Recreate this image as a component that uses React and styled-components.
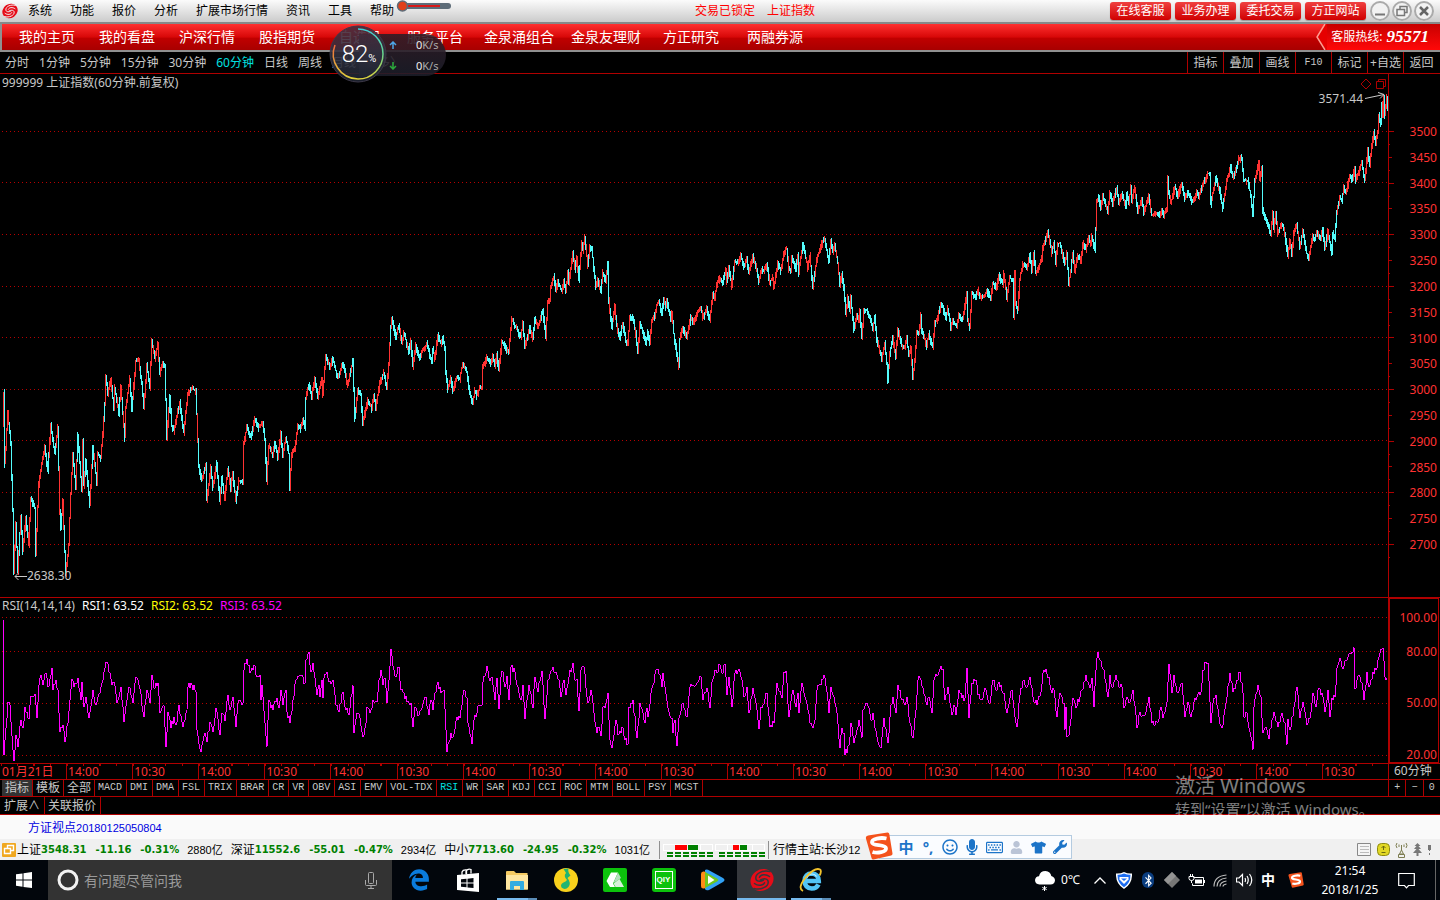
import styled, { createGlobalStyle, css } from "styled-components";
import {
  FaBluetoothB,
  FaEdgeLegacy,
  FaMicrophone,
  FaRegKeyboard,
  FaRegSmile,
  FaTshirt,
  FaUser,
  FaWrench,
} from "react-icons/fa";

const red = "#b00000";

const menuItems = ["系统", "功能", "报价", "分析", "扩展市场行情", "资讯", "工具", "帮助"];
const services = ["在线客服", "业务办理", "委托交易", "方正网站"];
const navItems = [
  ["我的主页", 80],
  ["我的看盘", 80],
  ["沪深行情", 80],
  ["股指期货", 80],
  ["自选股", 66],
  ["服务平台", 84],
  ["金泉涌组合", 84],
  ["金泉友理财", 90],
  ["方正研究", 80],
  ["两融券源", 88],
];
const periods = ["分时", "1分钟", "5分钟", "15分钟", "30分钟", "60分钟", "日线", "周线", "月线", "更多〉"];
const tools = ["指标", "叠加", "画线", "F10", "标记", "+自选", "返回"];
const indicators =
  "MACD DMI DMA FSL TRIX BRAR CR VR OBV ASI EMV VOL-TDX RSI WR SAR KDJ CCI ROC MTM BOLL PSY MCST".split(" ");
const priceLabels = Array.from({ length: 17 }, (_, i) => 3500 - i * 50);
const timeLabels = ["01月21日", ...Array.from({ length: 20 }, (_, i) => (i % 2 ? "10:30" : "14:00"))];
const quotes = [
  ["上证", "3548.31", "-11.16", "-0.31%", "2880亿"],
  ["深证", "11552.6", "-55.01", "-0.47%", "2934亿"],
  ["中小", "7713.60", "-24.95", "-0.32%", "1031亿"],
];

// turning points of the index, "x,y" in chart units
const pricePoints = `3,425 4,392 5,463 8,413 11,443 13,510 14,573 16,523 18,570 21,515 23,550 26,517 29,543 31,497 35,508
36,552 39,483 42,463 45,445 48,470 51,425 55,453 58,427 60,510 61,527 63,500 66,575 69,543 71,493 73,453 76,487 78,435
82,490 83,440 84,485 86,460 90,505 93,447 97,482 98,453 101,457 103,433 105,405 106,375 108,393 111,379 114,407 115,387
119,412 121,386 125,437 126,407 130,378 132,410 136,360 139,358 142,383 144,408 147,365 150,387 152,340 155,358 158,343
160,372 163,362 165,366 166,400 167,437 170,395 172,425 174,430 180,402 184,432 188,393 192,388 196,390 197,413 199,467
202,480 206,463 207,500 211,467 213,487 217,462 220,501 222,477 225,498 228,468 231,487 233,472 236,501 239,480 243,482
244,443 247,426 251,437 255,418 259,427 263,422 265,438 267,480 269,445 273,455 275,441 278,458 281,432 283,455 286,437
289,453 290,487 292,453 295,448 298,425 301,428 303,418 305,427 306,397 309,385 312,395 315,378 318,397 322,378 323,395
326,355 330,367 333,358 338,378 343,362 348,385 353,360 355,418 358,388 361,395 363,422 368,400 372,408 374,395 376,407
380,382 384,372 387,387 389,363 391,327 392,318 396,337 399,325 402,343 404,332 409,350 411,340 413,365 416,345 419,357
427,343 432,362 433,348 435,358 438,335 441,343 443,337 445,347 446,372 448,388 451,377 453,390 457,377 460,378 463,362
467,372 470,393 473,403 475,390 477,395 480,387 482,387 483,367 487,357 491,363 493,356 495,365 497,354 499,370 502,340
506,348 509,352 512,318 515,325 521,336 523,323 525,346 530,327 533,338 535,317 538,327 543,309 546,337 548,302 550,300
551,286 554,276 556,289 558,281 562,291 564,280 566,291 568,271 569,282 573,253 575,268 577,257 579,280 582,242 583,250
585,236 588,265 590,247 592,247 594,267 596,287 598,278 601,291 603,272 606,280 608,263 609,300 612,327 615,305 616,317
618,330 620,337 623,323 626,340 628,344 630,317 633,317 636,333 638,352 640,324 643,330 646,343 648,332 650,342 652,320
655,315 657,304 659,301 662,312 664,299 666,307 667,300 671,318 672,312 674,333 677,353 679,365 680,338 683,326 687,338
691,315 693,323 698,312 701,306 703,318 707,307 710,320 713,293 715,298 717,283 720,277 723,282 726,268 727,282 729,267
732,285 735,260 738,262 741,254 744,267 747,259 749,272 753,256 757,269 759,281 762,268 764,271 767,263 770,282 773,277
774,287 778,263 781,270 782,265 784,252 787,248 789,268 791,270 792,255 796,269 798,255 799,272 803,243 806,257 808,267
810,255 813,287 815,273 817,258 819,252 822,243 825,238 827,250 829,262 831,240 833,252 835,245 838,263 840,285 842,273
844,287 846,312 848,297 850,310 851,297 854,328 857,315 859,320 860,310 862,337 864,310 867,310 870,317 873,328 875,317
877,338 880,352 882,358 885,343 887,363 888,380 890,353 893,338 896,356 898,328 902,345 905,347 907,337 909,355 911,347
913,377 915,360 917,332 919,333 921,315 922,330 927,345 929,333 933,347 935,323 938,317 941,304 943,307 946,318 948,308
951,327 953,320 957,327 959,314 961,317 963,318 967,293 968,320 970,327 972,293 976,297 978,290 981,298 985,295 987,290
991,298 993,282 997,287 999,275 1003,283 1004,273 1007,297 1010,277 1013,280 1014,316 1015,272 1016,303 1018,310
1020,278 1023,263 1027,268 1030,255 1032,269 1034,253 1036,273 1042,258 1043,247 1048,232 1052,252 1054,242 1056,262
1058,243 1060,243 1062,250 1065,263 1067,253 1069,284 1071,270 1073,253 1075,270 1078,255 1081,260 1083,243 1086,248
1089,237 1091,243 1092,235 1095,250 1096,227 1097,200 1099,197 1101,207 1103,195 1108,212 1110,193 1113,202 1117,187
1119,202 1122,193 1126,205 1127,193 1129,201 1131,187 1132,200 1135,187 1138,210 1142,200 1144,212 1149,195 1152,215
1157,213 1159,216 1162,209 1164,214 1167,209 1168,177 1169,190 1171,203 1175,186 1178,195 1182,183 1185,198 1188,192
1193,202 1197,192 1199,195 1205,180 1208,173 1210,173 1211,203 1213,193 1216,178 1220,190 1223,208 1227,180 1231,166
1233,177 1237,167 1239,158 1242,157 1244,180 1248,180 1251,195 1253,214 1255,180 1259,162 1260,178 1262,168 1263,210
1266,218 1268,223 1271,233 1273,213 1274,229 1276,213 1278,232 1282,223 1285,233 1288,255 1290,240 1292,253 1294,233
1297,223 1300,247 1303,230 1307,253 1309,257 1313,235 1315,240 1317,232 1321,237 1323,228 1325,248 1328,231 1332,252
1333,232 1335,237 1337,213 1340,197 1342,200 1344,187 1346,193 1350,175 1352,180 1355,168 1356,180 1362,162 1365,180
1368,150 1370,165 1372,145 1374,132 1376,142 1378,132 1379,115 1381,123 1382,102 1383,117 1384,96 1385,115 1387,97`;

const rsiPoints = `3,617 4,755 8,702 10,705 13,750 14,761 16,735 18,747 21,720 23,728 25,707 29,719 31,696 35,694 37,718
39,685 41,675 43,685 46,673 48,687 52,668 53,690 56,680 58,690 60,732 63,725 65,742 68,723 70,700 72,679 74,687 78,678
81,700 82,682 84,707 86,697 89,718 93,690 96,705 100,693 104,672 107,662 110,673 112,685 114,682 117,703 121,687 124,722
129,687 133,703 136,677 139,685 144,717 147,690 150,703 152,675 154,688 158,683 160,713 164,705 166,747 168,712 171,728
174,717 176,725 179,705 183,727 187,710 188,687 192,685 196,692 197,730 201,752 205,733 207,742 210,722 213,732 216,708
220,735 222,713 225,721 228,695 230,710 233,697 236,727 238,703 243,703 244,670 247,659 250,673 254,665 257,677 260,675
261,700 262,685 265,723 267,747 269,700 273,710 277,698 279,708 281,690 283,705 286,690 287,712 290,723 293,700 296,680
300,675 305,683 306,660 309,652 311,672 313,663 317,695 319,685 320,697 322,680 323,698 324,678 327,672 329,682 333,680
336,705 339,712 343,692 346,710 349,715 353,685 354,733 357,713 360,718 363,737 366,723 367,707 370,713 373,700 377,702
379,680 381,670 383,685 385,678 387,703 389,680 391,649 394,670 396,677 399,667 401,690 404,693 407,702 411,703 413,727
415,707 419,715 426,697 429,715 431,700 433,710 435,693 438,682 441,693 444,690 446,730 447,752 451,733 453,737 457,717
460,718 462,705 464,690 467,698 468,723 472,744 474,720 477,713 479,705 482,706 483,682 487,666 489,678 492,677 495,700
497,678 499,709 501,677 503,672 505,687 507,676 509,700 511,667 515,672 519,693 521,700 523,685 525,719 529,685 533,708
535,677 538,692 542,671 545,719 548,680 553,667 556,672 559,680 561,697 564,680 566,695 569,677 573,663 575,680 577,679
579,711 581,670 584,667 587,697 588,703 591,690 594,713 597,733 599,727 601,736 603,707 605,708 608,693 610,740 612,748
616,720 618,735 623,728 625,740 628,744 629,707 633,700 637,738 640,703 645,723 647,708 648,717 652,688 657,669 660,675
662,687 663,673 665,687 669,712 672,718 673,733 675,720 677,746 679,718 683,703 687,717 690,687 693,685 696,685 701,677
703,700 707,688 710,708 712,682 715,670 717,673 719,664 722,673 725,664 727,695 729,677 732,707 735,673 740,672 743,687
744,697 747,687 749,713 753,688 756,703 759,729 761,707 763,705 767,693 770,727 774,723 777,683 782,698 784,672 786,671
789,717 793,690 796,707 798,693 799,713 802,683 806,700 810,723 813,728 815,720 817,690 822,679 824,675 827,692 829,713
831,687 834,697 837,713 840,748 842,728 844,733 845,755 849,745 851,723 854,743 859,720 862,738 863,710 867,703 872,720
873,713 877,737 881,748 884,718 888,743 891,705 893,697 896,713 898,685 902,700 905,705 907,697 909,717 913,738 916,710
918,680 920,678 923,688 927,705 929,697 932,713 934,680 941,666 943,669 945,700 948,687 952,715 954,705 956,715 959,690
962,698 965,698 967,668 969,718 972,683 976,680 978,695 983,698 985,688 990,703 993,680 997,690 999,682 1004,693
1007,713 1010,698 1012,690 1015,717 1017,727 1020,695 1024,680 1027,687 1030,677 1033,697 1037,705 1041,692 1043,673
1046,669 1049,677 1052,693 1054,690 1057,717 1060,693 1064,703 1065,730 1066,707 1067,737 1069,735 1073,698 1076,708
1082,690 1086,675 1090,688 1092,678 1094,707 1096,670 1098,652 1100,660 1104,670 1108,697 1110,675 1112,687 1116,675
1119,687 1122,687 1124,708 1127,697 1129,703 1133,690 1137,728 1140,712 1145,715 1149,697 1152,723 1158,722 1161,707
1163,718 1167,702 1169,664 1172,693 1174,675 1177,692 1182,683 1185,717 1188,702 1191,717 1195,698 1201,692 1203,670
1206,662 1208,663 1211,723 1213,703 1216,695 1219,717 1222,728 1227,697 1230,673 1233,692 1240,672 1243,693 1244,717
1247,713 1250,732 1253,750 1254,707 1258,685 1261,697 1263,733 1266,727 1269,739 1272,720 1274,712 1278,727 1282,713
1285,723 1287,745 1288,719 1290,730 1294,707 1297,687 1300,718 1303,702 1307,725 1310,718 1313,693 1316,707 1318,690
1322,693 1325,712 1328,690 1330,717 1332,698 1335,697 1337,668 1340,658 1342,667 1347,660 1350,653 1354,647 1355,688
1359,675 1362,683 1364,700 1367,672 1369,687 1373,672 1377,668 1379,657 1383,648 1385,677 1387,678`;

const parse = (text) => text.split(/\s+/).map((p) => p.split(",").map(Number));

// fixed pseudo random value for a column, 0..1
const noise = (n) => {
  const v = Math.sin(n * 127.1 + 11.7) * 43758.5453;
  return v - Math.floor(v);
};

const sample = (points) => {
  const out = [];
  for (let i = 0; i < points.length - 1; i++) {
    const [x0, y0] = points[i];
    const [x1, y1] = points[i + 1];
    for (let x = x0; x < x1; x++) {
      out.push({ x, y: y0 + ((y1 - y0) * (x - x0)) / (x1 - x0), fixed: x === x0 });
    }
  }
  const [x, y] = points[points.length - 1];
  out.push({ x, y, fixed: true });
  return out;
};

const buildBars = () => {
  const s = sample(parse(pricePoints));
  let up = "";
  let down = "";
  s.forEach((p, i) => {
    const next = s[i + 1] || { y: p.y + 10 };
    const top = Math.round(Math.min(p.y, next.y) - noise(p.x) * 3);
    const bottom = Math.round(Math.max(p.y, next.y) + 1 + noise(p.x + 3000) * 4);
    const rising = noise(p.x + 900) < 0.18 ? next.y >= p.y : next.y < p.y;
    const seg = `M${p.x} ${top}h1V${bottom}h-1z`;
    if (rising) up += seg;
    else down += seg;
  });
  return { up, down };
};

const buildRsi = () =>
  sample(parse(rsiPoints))
    .map((p) => `${p.x},${Math.round(p.fixed ? p.y : p.y + (noise(p.x) - 0.5) * 7)}`)
    .join(" ");

const bars = buildBars();
const rsiLine = buildRsi();
const priceGrid = [131, 182, 234, 286, 337, 389, 440, 492, 544];
const rsiGrid = [617, 651, 703, 755];

const Grid = ({ rows }) => (
  <g stroke='#b80000' strokeDasharray='1 3' shapeRendering='crispEdges'>
    {rows.map((y) => (
      <line key={y} x1='2' x2='1388' y1={y + 0.5} y2={y + 0.5} />
    ))}
  </g>
);

const Swirl = ({ size, gap }) => (
  <svg width={size} height={size} viewBox='0 0 24 24'>
    <ellipse cx='12' cy='12' rx='12' ry='10.5' fill='#e60c18' transform='rotate(-35 12 12)' />
    <g fill='none' stroke={gap} strokeWidth='1.500' strokeLinecap='round'>
      <path d='M20 3.500C13 1.500 5.500 5.500 5.800 10.200C6 13.800 10.500 13.800 13.500 12' />
      <path d='M4 20.500C11 22.500 18.500 18.500 18.200 13.800C18 10.200 13.500 10.200 10.500 12' />
      <path d='M19.500 8.500C16 5.800 10.500 6.500 9.500 9.300' />
      <path d='M4.500 15.500C8 18.200 13.500 17.500 14.500 14.700' />
    </g>
  </svg>
);

const SogouLogo = ({ size }) => (
  <svg width={size} height={size} viewBox='0 0 28 28'>
    <path d='M3 3.500L22.500.5Q24 .4 24.300 2L27.500 21.500Q27.700 23 26.200 23.500L8.500 27.500Q7 27.700 6.600 26.200L.8 6Q.5 4 3 3.500z' fill='#f4521c' />
    <path
      d='M21.500 6.500C16 5.300 6.500 6.500 7 10.500C7.500 14.300 20.500 12 21 16.300C21.400 20.300 12 21.500 7.500 20'
      fill='none'
      stroke='#fff'
      strokeWidth='3.800'
    />
  </svg>
);

const SpeedWidget = () => (
  <Speed>
    <SpeedPill>
      <SpeedRow>
        <svg width='8' height='8' viewBox='0 0 8 8' fill='none' stroke='#4da6e8' strokeWidth='1.500'>
          <path d='M4 8V1.500M1 4L4 1L7 4' />
        </svg>
        <b>0</b>K/s
      </SpeedRow>
      <SpeedRow>
        <svg width='8' height='8' viewBox='0 0 8 8' fill='none' stroke='#2bab3c' strokeWidth='1.500'>
          <path d='M4 0V6.500M1 4L4 7L7 4' />
        </svg>
        <b>0</b>K/s
      </SpeedRow>
    </SpeedPill>
    <SpeedDial>
      <svg width='58' height='58' viewBox='0 0 58 58'>
        <defs>
          <linearGradient id='ring' x1='0' y1='0' x2='0' y2='1'>
            <stop offset='0' stopColor='#3fd0d8' />
            <stop offset='.5' stopColor='#67d58c' />
            <stop offset='1' stopColor='#e0d23c' />
          </linearGradient>
          <linearGradient id='ringLeft' x1='0' y1='0' x2='0' y2='1'>
            <stop offset='0' stopColor='#f0683c' />
            <stop offset='1' stopColor='#e0d23c' />
          </linearGradient>
          <linearGradient id='dial' x1='0' y1='0' x2='0' y2='1'>
            <stop offset='0' stopColor='#4a2838' />
            <stop offset='.5' stopColor='#30303f' />
            <stop offset='1' stopColor='#1c2230' />
          </linearGradient>
        </defs>
        <circle cx='29' cy='29' r='28' fill='url(#dial)' fillOpacity='.9' stroke='#3c3848' />
        <path d='M29 4A25 25 0 0 1 29 54' fill='none' stroke='url(#ring)' strokeWidth='1.500' />
        <path d='M29 54A25 25 0 0 1 6 20' fill='none' stroke='url(#ringLeft)' strokeWidth='1.500' />
      </svg>
      <span>
        82<small>%</small>
      </span>
    </SpeedDial>
  </Speed>
);

const Meter = () => (
  <svg width='104' height='16' viewBox='0 0 104 16' shapeRendering='crispEdges'>
    {[0, 52].map((x) => (
      <g key={x} transform={`translate(${x} 0)`}>
        <path d='M.5 1.500h49v6h-49zM12.500 1v7M37.500 1v7' fill='none' stroke='#fff' />
        <rect x={x ? 18 : 12} y='2' width={x ? 6 : 12} height='5' fill='#f00' />
        <rect x='25' y='2' width={x ? 7 : 10} height='5' fill='#008000' />
        {[4, 12, 20, 28, 36, 44].map((dx) => (
          <path key={dx} d={`M${dx} 9h6v2h-6zM${dx} 12h6v2h-6z`} fill='#008000' />
        ))}
      </g>
    ))}
  </svg>
);

const App = () => {
  return (
    <>
      <GlobalStyle />
      <Screen>
        <MenuBar>
          <Swirl size={16} gap='#f4f4f4' />
          <Menu>
            {menuItems.map((m) => (
              <button key={m}>{m}</button>
            ))}
          </Menu>
          <LockState>
            <span>交易已锁定</span>
            <span>上证指数</span>
          </LockState>
          <Services>
            {services.map((s) => (
              <ServiceButton key={s}>{s}</ServiceButton>
            ))}
          </Services>
          <WindowButtons>
            <button aria-label='最小化'>
              <svg width='20' height='20' viewBox='0 0 20 20'>
                <path d='M5 13.500h10' stroke='#777' strokeWidth='2' />
              </svg>
            </button>
            <button aria-label='还原'>
              <svg width='20' height='20' viewBox='0 0 20 20' fill='none' stroke='#777' strokeWidth='1.500'>
                <path d='M8 8V5.500h7v6h-2.500M5 8.500h7.500v6H5z' />
              </svg>
            </button>
            <button aria-label='关闭'>
              <svg width='20' height='20' viewBox='0 0 20 20'>
                <path d='M6 6l8 8M14 6l-8 8' stroke='#666' strokeWidth='2.500' />
              </svg>
            </button>
          </WindowButtons>
        </MenuBar>

        <NavBar>
          {navItems.map(([name, width]) => (
            <NavButton key={name} $width={width}>
              {name}
            </NavButton>
          ))}
          <Hotline>
            <svg width='12' height='26' viewBox='0 0 12 26'>
              <path d='M10 0L2 13L11 26H12V0z' fill='#e60000' />
              <path d='M10 0L2 13L10 26' fill='none' stroke='#ff9c90' strokeWidth='1.500' />
            </svg>
            <p>
              客服热线:<strong>95571</strong>
            </p>
          </Hotline>
        </NavBar>

        <PeriodBar>
          <Periods>
            {periods.map((p) => (
              <PeriodButton key={p} $active={p === "60分钟"}>
                {p}
              </PeriodButton>
            ))}
          </Periods>
          {tools.map((t) => (
            <ToolButton key={t} $mono={t === "F10"}>
              {t}
            </ToolButton>
          ))}
        </PeriodBar>

        <PricePanel>
          <Plot>
            <svg viewBox='0 74 1388 523' preserveAspectRatio='none' role='img' aria-label='上证指数'>
              <Grid rows={priceGrid} />
              <g shapeRendering='crispEdges'>
                <path d={bars.up} fill='#ff3232' />
                <path d={bars.down} fill='#54fcfc' />
              </g>
            </svg>
            <PlotTitle>999999 上证指数(60分钟.前复权)</PlotTitle>
            <PlotTools>
              <svg width='28' height='12' viewBox='0 0 28 12' fill='none' stroke='#b00000'>
                <path d='M6 1L11 6L6 11L1 6z' />
                <path d='M16.500 3.500h7v7h-7zM18.500 3.500v-2h7v7h-2' />
              </svg>
            </PlotTools>
            <HighNote>
              3571.44
              <svg width='22' height='12' viewBox='0 0 22 12' fill='none' stroke='#c8c8c8'>
                <path d='M1 6.500L20 2.500M14 .5L20 2.500L16 6.500' />
              </svg>
            </HighNote>
            <LowNote>
              <svg width='13' height='9' viewBox='0 0 13 9' fill='none' stroke='#c8c8c8'>
                <path d='M1 4.500h12M4.500 1L1 4.500L4.500 8' />
              </svg>
              2638.30
            </LowNote>
          </Plot>
          <PriceAxis>
            <svg width='6' viewBox='0 74 6 523' preserveAspectRatio='none' stroke={red} shapeRendering='crispEdges'>
              {priceLabels.map((v, i) => {
                const y = Math.round(131 + i * 25.8) + 0.5;
                return <path key={v} d={`M0 ${y}h${i % 2 ? 3 : 5}M0 ${y + 13}h1`} />;
              })}
            </svg>
            <ol>
              {priceLabels.map((v) => (
                <li key={v}>{v}</li>
              ))}
            </ol>
          </PriceAxis>
        </PricePanel>

        <RsiPanel>
          <Plot>
            <svg viewBox='0 598 1388 165' preserveAspectRatio='none' role='img' aria-label='RSI'>
              <Grid rows={rsiGrid} />
              <polyline points={rsiLine} fill='none' stroke='#f0f' shapeRendering='crispEdges' />
            </svg>
            <PlotTitle $tight>
              RSI(14,14,14)
              <Value $color='#fff'>RSI1: 63.52</Value>
              <Value $color='#ff0'>RSI2: 63.52</Value>
              <Value $color='#f0f'>RSI3: 63.52</Value>
            </PlotTitle>
          </Plot>
          <RsiAxis>
            <li>100.00</li>
            <li>80.00</li>
            <li>50.00</li>
            <li>20.00</li>
          </RsiAxis>
        </RsiPanel>

        <TimeRow>
          <TimeAxis>
            {timeLabels.map((t, i) => (
              <li key={i}>{t}</li>
            ))}
          </TimeAxis>
          <SideCell>60分钟</SideCell>
        </TimeRow>

        <TabRow>
          <Tab $selected>指标</Tab>
          <Tab>模板</Tab>
          <Tab>全部</Tab>
          {indicators.map((t) => (
            <Tab key={t} $mono $active={t === "RSI"}>
              {t}
            </Tab>
          ))}
          <ZoomButtons>
            <button>+</button>
            <button>−</button>
            <button>0</button>
          </ZoomButtons>
        </TabRow>

        <ExtraRow>
          <ExtraTab>扩展∧</ExtraTab>
          <ExtraTab>关联报价</ExtraTab>
        </ExtraRow>

        <News>
          <a href='#news'>
            方证视点<span>20180125050804</span>
          </a>
        </News>

        <Ticker>
          <svg width='14' height='14' viewBox='0 0 14 14'>
            <rect width='14' height='14' rx='1' fill='#f0a820' />
            <path d='M5.500 5.500v-3h6v5h-3M2.500 5.500h6v5h-6z' fill='none' stroke='#fff' strokeWidth='1.400' />
          </svg>
          {quotes.map(([name, price, change, percent, amount]) => (
            <Quote key={name}>
              {name}
              <b>{price}</b>
              <b>{change}</b>
              <b>{percent}</b>
              <span>{amount}</span>
            </Quote>
          ))}
          <MeterBox>
            <Meter />
          </MeterBox>
          <Host>
            行情主站:长沙<span>12</span>
          </Host>
          <TickerIcons>
            <svg width='15' height='13' viewBox='0 0 15 13' fill='#f4f4f4' stroke='#888'>
              <path d='M.5.500h13v12H.5z' />
              <path d='M3 3.500h9M3 6.500h9M3 9.500h9' stroke='#bbb' />
            </svg>
            <svg width='13' height='13' viewBox='0 0 13 13'>
              <rect x='.5' y='.5' width='12' height='12' rx='4' fill='#e2d824' stroke='#8d8a10' />
              <path d='M6.500 3v4M4.500 5l2-2l2 2M4.500 9.500h4' stroke='#6c6a10' fill='none' />
            </svg>
            <svg width='13' height='16' viewBox='0 0 13 16' fill='none' stroke='#7c7c50'>
              <path d='M2 1Q0 3.500 2 6M4 2.500v2.500M11 1Q13 3.500 11 6M9 2.500v2.500M6.500 3v5L4.500 12h4L6.500 8M3.500 15.500h6v-3h-6z' />
            </svg>
            <svg width='9' height='13' viewBox='0 0 9 13' fill='#777'>
              <path d='M4.500 0L7.500 3H5.500L8 6H5.500L9 10H5.500V13H3.500V10H0L3.500 6H1L3.500 3H1.500z' />
            </svg>
            <svg width='5' height='10' viewBox='0 0 5 10' fill='#777'>
              <path d='M1 0h3v5H3v1H2V5H1zM2 8h1v2H2z' />
            </svg>
          </TickerIcons>
        </Ticker>

        <TaskBar>
          <StartButton aria-label='开始'>
            <svg width='16' height='16' viewBox='0 0 16 16' fill='#fff'>
              <path d='M0 2.300L6.500 1.400V7.600H0zM7.500 1.200L16 0V7.600H7.500zM0 8.500H6.500V14.700L0 13.800zM7.500 8.500H16V16L7.500 14.900z' />
            </svg>
          </StartButton>
          <Search>
            <svg width='22' height='22' viewBox='0 0 22 22'>
              <circle cx='11' cy='11' r='9' fill='none' stroke='#f2f2f2' strokeWidth='3' />
            </svg>
            <input aria-label='搜索' placeholder='有问题尽管问我' />
            <svg width='12' height='17' viewBox='0 0 12 17' fill='none' stroke='#a8a8a8'>
              <rect x='3.500' y='.5' width='5' height='11' rx='1' />
              <path d='M.5 8v4.500Q.5 13.500 1.500 13.500h9Q11.500 13.500 11.500 12.500V8M6 13.500V16M3 16.500h6' />
            </svg>
          </Search>
          <TaskApps>
            <TaskButton aria-label='Edge'>
              <FaEdgeLegacy size={22} color='#0a7bdc' />
            </TaskButton>
            <TaskButton aria-label='应用商店'>
              <svg width='22' height='25' viewBox='0 0 22 25'>
                <path d='M0 7L22 5V24L0 22z' fill='#fff' />
                <path d='M5 7V4Q6 1.500 9.500 2V6.500M9 6V3Q11 .5 14 1.500V5.500' fill='none' stroke='#fff' strokeWidth='1.300' />
                <path d='M4 11.300L9.500 10.800V14.500H4zM10.500 10.700L16.500 10V14.500H10.500zM4 15.500H9.500V19.300L4 18.700zM10.500 15.500H16.500V20L10.500 19.400z' fill='#02060c' />
              </svg>
            </TaskButton>
            <TaskButton aria-label='文件资源管理器' $open>
              <svg width='22' height='19' viewBox='0 0 22 19'>
                <path d='M0 1Q0 0 1 0h7l2 2h11.500v16.500H0z' fill='#f5ca62' />
                <path d='M0 4h22v14.500H0z' fill='#ffe6a0' />
                <path d='M4 11Q4 10 5 10h12Q18 10 18 11v8h-4v-4H8v4H4z' fill='#34ace0' />
              </svg>
            </TaskButton>
            <TaskButton aria-label='QQ音乐'>
              <svg width='24' height='24' viewBox='0 0 24 24'>
                <circle cx='12' cy='12' r='12' fill='#f8d01c' />
                <path d='M9.500 1L14.500.5Q13.500 4 16.500 7.500L13.500 10Q17.500 15 14.500 19Q11 22.500 7.500 19.500Q5.500 15.500 11.500 13.500L13 12Q9 8 12 5z' fill='#22b573' />
              </svg>
            </TaskButton>
            <TaskButton aria-label='游戏'>
              <svg width='24' height='24' viewBox='0 0 24 24'>
                <rect width='24' height='24' rx='2' fill='#0cc20c' />
                <path d='M8 4.500h7L10 15.500L12 19H7L3.500 13z' fill='#fff' />
                <path d='M15 4.500L18 10L14.500 12.500L10.500 15z' fill='#b5dfc0' />
                <path d='M16.500 11L21 19H12.500L10.500 15.500z' fill='#d8f0da' />
              </svg>
            </TaskButton>
            <TaskButton aria-label='爱奇艺'>
              <QiyLogo>QIY</QiyLogo>
            </TaskButton>
            <TaskButton aria-label='腾讯视频'>
              <svg width='24' height='22' viewBox='0 0 24 22'>
                <path d='M4 1Q5 0 7 .8L22 9Q25 11 22 13L8 21Q5 22 4 20z' fill='#31a1f5' />
                <path d='M0 5Q0 2 3 2.500L5 3V19L3 19.500Q0 20 0 17z' fill='#ff8b17' />
                <path d='M4 3L16 9.500Q18.500 11 16 12.500L4 19z' fill='#6fc61c' />
                <path d='M7 6.500L13.500 11L7 15z' fill='#fff' />
              </svg>
            </TaskButton>
            <TaskButton aria-label='方正证券' $current>
              <Swirl size={24} gap='#35383d' />
            </TaskButton>
            <TaskButton aria-label='Internet Explorer' $open>
              <svg width='24' height='24' viewBox='0 0 24 24' fill='none'>
                <path d='M19.500 16.500Q17.500 20.500 12.800 20.500Q6 20 5.500 13Q6 5.500 12.800 5.500Q19.500 6 19.800 13H7' stroke='#52c4f6' strokeWidth='4.500' />
                <path d='M8 9.500Q9.500 6 13 6Q16 6 17.500 8.500' stroke='#c8f0ff' strokeWidth='1.200' />
                <path d='M4 23Q-2 20 7 9Q16-1 21 1.500Q23 3 20.500 7.500' stroke='#f2c22c' strokeWidth='1.800' />
              </svg>
            </TaskButton>
          </TaskApps>
          <Weather>
            <svg width='20' height='21' viewBox='0 0 20 21'>
              <path d='M4.500 14.500Q0 14 0 10Q.5 6.500 4 6.300Q5 1 10.500 1Q15.500 1.500 16.300 6Q20 7 20 10.500Q19.500 14.500 15.500 14.500z' fill='#fff' />
              <path d='M9.500 16v5M7.300 17.300l4.400 2.400M11.700 17.300l-4.400 2.400' stroke='#fff' />
            </svg>
            0℃
          </Weather>
          <Tray>
            <button aria-label='显示隐藏的图标'>
              <svg width='12' height='7' viewBox='0 0 12 7' fill='none' stroke='#fff' strokeWidth='1.300'>
                <path d='M.5 6.500L6 1L11.500 6.500' />
              </svg>
            </button>
            <button aria-label='电脑管家'>
              <svg width='16' height='17' viewBox='0 0 16 17'>
                <path d='M8 0Q12 2 16 1.500Q16.500 12 8 17Q-.5 12 0 1.500Q4 2 8 0z' fill='#fff' />
                <path d='M8 1.500Q11.500 3 14.500 2.800Q14.700 11 8 15.300Q1.300 11 1.500 2.800Q4.500 3 8 1.500z' fill='#1c6cf0' />
                <path d='M3.500 5h9v2.500L8 12L3.500 7.500z' fill='#fff' />
                <path d='M5 6.500h6L8 9z' fill='#1c6cf0' />
              </svg>
            </button>
            <button aria-label='蓝牙'>
              <BluetoothBadge>
                <FaBluetoothB size={13} />
              </BluetoothBadge>
            </button>
            <button aria-label='显卡设置'>
              <svg width='16' height='16' viewBox='0 0 16 16'>
                <path d='M8 0L16 8L8 16L0 8z' fill='#777' />
                <path d='M8 0L12 4L4 12L0 8z' fill='#949494' />
              </svg>
            </button>
            <button aria-label='电池'>
              <svg width='17' height='13' viewBox='0 0 17 13' fill='none' stroke='#fff'>
                <path d='M5.500 3.500H15.500V11.500H4.500V9.500M16.500 6v3M1 2.500h5v2Q6 6.500 3.500 6.500Q1 6.500 1 4.500zM2.500 0v2.500M4.500 0v2.500M3.500 6.500V9' />
                <path d='M7 5.500h7v4H7z' fill='#fff' stroke='none' />
              </svg>
            </button>
            <button aria-label='网络'>
              <svg width='14' height='13' viewBox='0 0 14 13' fill='none' stroke='#bbb' strokeWidth='1.200'>
                <path d='M1 12.500Q1 2 13.500 1M4 12.500Q4 5 13.500 4M7 12.500Q7 8 13.500 7M10 12.500Q10 10.500 13.500 10' />
              </svg>
            </button>
            <TrayHover aria-label='音量'>
              <svg width='17' height='14' viewBox='0 0 17 14' fill='none' stroke='#fff' strokeWidth='1.200'>
                <path d='M.5 5H3L6.500 1.500V12.500L3 9H.5zM9 5Q10 7 9 9M11 3Q13.500 7 11 11M13.500 1Q18 7 13.500 13' />
              </svg>
            </TrayHover>
            <Ime>中</Ime>
          </Tray>
          <SogouTray aria-label='搜狗输入法'>
            <SogouLogo size={16} />
          </SogouTray>
          <Clock>
            <time>21:54</time>
            <time>2018/1/25</time>
          </Clock>
          <Notice aria-label='通知'>
            <svg width='17' height='17' viewBox='0 0 17 17' fill='none' stroke='#fff' strokeWidth='1.200'>
              <path d='M.7 1.500H16.300V13.500H10.500L8.500 15.800L6.500 13.500H.7z' />
            </svg>
          </Notice>
        </TaskBar>

        <SpeedWidget />
        <Thermometer width='56' height='13' viewBox='0 0 56 13'>
          <rect x='8' y='3' width='47' height='6' rx='3' fill='#5d6c78' />
          <path d='M10 6h34' stroke='#d81818' strokeWidth='2' />
          <circle cx='6.500' cy='6' r='5' fill='#e0401a' stroke='#5d6c78' strokeWidth='1.500' />
        </Thermometer>
        <ImeBar>
          <SogouLogo size={28} />
          <button>中</button>
          <button>°,</button>
          <button aria-label='表情'>
            <FaRegSmile size={16} />
          </button>
          <button aria-label='语音'>
            <FaMicrophone size={16} />
          </button>
          <button aria-label='软键盘'>
            <FaRegKeyboard size={17} />
          </button>
          <ImeMuted aria-label='用户'>
            <FaUser size={13} />
          </ImeMuted>
          <button aria-label='皮肤'>
            <FaTshirt size={15} />
          </button>
          <button aria-label='工具箱'>
            <FaWrench size={14} />
          </button>
        </ImeBar>
        <Watermark>
          <h2>激活 Windows</h2>
          <p>转到“设置”以激活 Windows。</p>
        </Watermark>
      </Screen>
    </>
  );
};

const GlobalStyle = createGlobalStyle`
  * {
    box-sizing: border-box;
    margin: 0;
    padding: 0;
  }
  body {
    background: #000;
    font: 12px/14px "Noto Sans", "Noto Sans CJK SC", sans-serif;
    color: #c8c8c8;
  }
  button {
    border: 0;
    background: none;
    color: inherit;
    font: inherit;
    white-space: nowrap;
    cursor: pointer;
  }
  ol {
    list-style: none;
  }
  svg {
    display: block;
    flex-shrink: 0;
  }
`;

const center = css`
  display: flex;
  align-items: center;
  justify-content: center;
`;

const mono = css`
  font-family: "Liberation Mono", monospace;
  font-size: 10px;
`;

const Screen = styled.main`
  position: relative;
  display: flex;
  flex-direction: column;
  height: 100vh;
  min-height: 640px;
  overflow: hidden;
`;

const MenuBar = styled.header`
  display: flex;
  align-items: center;
  height: 24px;
  padding: 0 6px 0 2px;
  border-bottom: 2px solid #888;
  background: linear-gradient(#fbfbfb, #cbcbcb);
  color: #000;
`;

const Menu = styled.nav`
  display: flex;
  gap: 18px;
  padding-left: 10px;
`;

const LockState = styled.p`
  display: flex;
  gap: 12px;
  margin: 0 auto;
  padding-left: 6px;
  color: #f00;
`;

const Services = styled.div`
  display: flex;
  gap: 4px;
`;

const ServiceButton = styled.button`
  width: 61px;
  height: 18px;
  border-radius: 3px;
  background: linear-gradient(#f04040, #d00000);
  box-shadow: 0 1px 1px #999;
  color: #fff;
`;

const WindowButtons = styled.div`
  display: flex;
  gap: 2px;
  margin-left: 4px;
  button {
    width: 20px;
    height: 20px;
    border-radius: 50%;
    background: #f2f2f2;
    box-shadow: inset 0 0 0 2px #aaa;
  }
`;

const NavBar = styled.nav`
  display: flex;
  height: 28px;
  padding-left: 5px;
  border: solid #909090;
  border-width: 0 0 2px 2px;
  background: linear-gradient(#ff3030, #d80808 50%, #c00000 55%, #a80000);
`;

const NavButton = styled.button`
  width: ${(p) => p.$width}px;
  color: #fff;
  font-size: 14px;
`;

const Hotline = styled.div`
  display: flex;
  margin-left: auto;
  color: #fff;
  p {
    display: flex;
    align-items: center;
    padding: 0 11px 0 4px;
    background: linear-gradient(#c80000, #ff0808);
  }
  strong {
    padding-left: 4px;
    font: italic bold 17px/20px "Liberation Serif", serif;
  }
`;

const PeriodBar = styled.div`
  display: flex;
  height: 22px;
  padding-right: 1px;
  border-bottom: 1px solid ${red};
`;

const Periods = styled.div`
  display: flex;
  flex: 1;
  gap: 10px;
  padding-left: 5px;
`;

const PeriodButton = styled.button`
  color: ${(p) => (p.$active ? "#00e0e0" : "#c8c8c8")};
`;

const ToolButton = styled.button`
  width: 36px;
  border-left: 1px solid ${red};
  ${(p) => p.$mono && mono}
`;

const PricePanel = styled.section`
  display: flex;
  flex: 1 1 0;
  min-height: 0;
  border-bottom: 1px solid ${red};
`;

const Plot = styled.div`
  position: relative;
  flex: 1;
  min-width: 0;
  > svg {
    width: 100%;
    height: 100%;
  }
`;

const PlotTitle = styled.h1`
  position: absolute;
  top: ${(p) => (p.$tight ? 1 : 2)}px;
  left: 2px;
  display: flex;
  gap: 7px;
  font-size: 12px;
  font-weight: 400;
  line-height: 14px;
`;

const PlotTools = styled.div`
  position: absolute;
  top: 4px;
  right: 0;
`;

const HighNote = styled.span`
  position: absolute;
  top: 18px;
  right: 2px;
  display: flex;
  gap: 1px;
`;

const LowNote = styled.span`
  position: absolute;
  bottom: 14px;
  left: 14px;
  display: flex;
  align-items: center;
`;

const Value = styled.span`
  color: ${(p) => p.$color};
`;

const PriceAxis = styled.div`
  display: flex;
  flex: 0 0 52px;
  padding-right: 3px;
  border-left: 1px solid ${red};
  color: #ff3232;
  > svg {
    height: 100%;
  }
  ol {
    flex: 1;
    display: flex;
    flex-direction: column;
    justify-content: space-between;
    padding: 51px 0 45px;
    text-align: right;
  }
`;

const RsiPanel = styled.section`
  display: flex;
  height: 166px;
  border-bottom: 1px solid ${red};
`;

const RsiAxis = styled.ol`
  display: grid;
  flex: 0 0 51px;
  grid-template-rows: 26fr 34fr 52fr 52fr;
  align-items: end;
  margin-right: 1px;
  padding-right: 1px;
  border: 2px solid ${red};
  border-width: 1px 1px 1px 2px;
  color: #ff3232;
  text-align: right;
`;

const TimeRow = styled.div`
  display: flex;
  height: 16px;
  padding-left: 1px;
  border-bottom: 1px solid ${red};
`;

const TimeAxis = styled.ol`
  display: flex;
  flex: 1;
  color: #ff3232;
  li {
    flex: 1 1 0;
    padding-left: 1px;
    line-height: 15px;
    background: repeating-linear-gradient(90deg, ${red} 0 1px, transparent 1px 25%) no-repeat 0 0 / 100% 2px;
  }
  li + li {
    border-left: 1px solid ${red};
  }
`;

const SideCell = styled.span`
  flex: 0 0 52px;
  padding-left: 5px;
  border-left: 1px solid ${red};
`;

const TabRow = styled.div`
  display: flex;
  height: 17px;
  padding-left: 2px;
  border-bottom: 1px solid ${red};
`;

const Tab = styled.button`
  padding: 0 3px;
  border-right: 1px solid ${red};
  background: ${(p) => (p.$selected ? "#333" : "none")};
  color: ${(p) => (p.$active ? "#00e0e0" : "#c8c8c8")};
  ${(p) =>
    p.$mono &&
    css`
      padding: 0 4px 0 3px;
      ${mono}
    `}
`;

const ZoomButtons = styled.div`
  display: flex;
  flex: 0 0 52px;
  margin-left: auto;
  button {
    flex: 1;
    border-left: 1px solid ${red};
    ${mono}
  }
`;

const ExtraRow = styled.div`
  display: flex;
  height: 18px;
  padding-left: 1px;
  border-bottom: 1px solid ${red};
`;

const ExtraTab = styled.button`
  padding: 0 4px 0 3px;
  border-right: 1px solid ${red};
`;

const News = styled.div`
  display: flex;
  align-items: center;
  height: 24px;
  padding: 2px 0 0 28px;
  background: #fafafa;
  a {
    color: #0000e0;
    text-decoration: none;
  }
  span {
    font-family: "Liberation Sans", sans-serif;
    font-size: 11px;
  }
`;

const Ticker = styled.div`
  display: flex;
  align-items: center;
  height: 21px;
  padding: 0 8px 0 2px;
  background: #f0f0f0;
  color: #000;
`;

const Quote = styled.p`
  display: flex;
  align-items: center;
  margin: 0 7px 0 1px;
  b {
    color: #008000;
    font-family: "DejaVu Sans", sans-serif;
    font-size: 10px;
  }
  b + b {
    padding-left: 9px;
  }
  span {
    padding-left: 8px;
    font-family: "Liberation Sans", "Noto Sans CJK SC", sans-serif;
    font-size: 11px;
  }
`;

const MeterBox = styled.div`
  margin-left: 2px;
  padding: 2px 1px 0 3px;
  border: solid #909090;
  border-width: 0 1px;
`;

const Host = styled.p`
  padding-left: 4px;
  span {
    font-family: "Liberation Sans", sans-serif;
    font-size: 11px;
  }
`;

const TickerIcons = styled.div`
  display: flex;
  align-items: center;
  gap: 5px;
  margin-left: auto;
`;

const TaskBar = styled.footer`
  display: flex;
  height: 40px;
  background: #02060c;
  color: #fff;
`;

const StartButton = styled.button`
  ${center}
  width: 48px;
`;

const Search = styled.label`
  display: flex;
  align-items: center;
  width: 344px;
  padding: 0 15px 0 9px;
  background: #333;
  input {
    flex: 1;
    min-width: 0;
    padding-left: 5px;
    border: 0;
    outline: 0;
    background: none;
    color: #fff;
    font: inherit;
    font-size: 14px;
  }
  input::placeholder {
    color: #9a9a9a;
    opacity: 1;
  }
`;

const TaskApps = styled.div`
  display: flex;
  flex: 1;
  padding-left: 2px;
`;

const TaskButton = styled.button`
  ${center}
  width: 49px;
  background: ${(p) => {
    if (p.$current) return "linear-gradient(#76b9ed, #76b9ed) no-repeat bottom / 100% 2px, #35383d";
    if (p.$open) return "linear-gradient(90deg, #76b9ed 31px, #5b8db8 31px) no-repeat bottom / 40px 2px";
    return "none";
  }};
`;

const QiyLogo = styled.span`
  ${center}
  width: 24px;
  height: 24px;
  border-radius: 3px;
  outline: 1px solid #fff;
  outline-offset: -4px;
  background: #0cc20c;
  font: bold 8px/12px "Liberation Sans", sans-serif;
`;

const Weather = styled.div`
  display: flex;
  align-items: center;
  gap: 6px;
  width: 53px;
`;

const Tray = styled.div`
  display: flex;
  button {
    ${center}
    width: 24px;
  }
`;

const TrayHover = styled.button`
  background: #14171c;
`;

const BluetoothBadge = styled.span`
  ${center}
  width: 12px;
  height: 16px;
  border-radius: 6px;
  background: #0a3d80;
`;

const Ime = styled.button`
  font-size: 14px;
  font-weight: 700;
`;

const SogouTray = styled.button`
  ${center}
  width: 32px;
`;

const Clock = styled.div`
  display: flex;
  flex-direction: column;
  justify-content: center;
  gap: 5px;
  width: 76px;
  text-align: center;
`;

const Notice = styled.button`
  ${center}
  width: 48px;
  margin-right: 4px;
  padding-right: 10px;
  border-right: 1px solid #666;
`;

const Speed = styled.aside`
  position: absolute;
  top: 25px;
  left: 329px;
`;

const SpeedPill = styled.div`
  position: absolute;
  top: 9px;
  left: 30px;
  width: 87px;
  height: 42px;
  padding-left: 30px;
  border-radius: 0 21px 21px 0;
  background: linear-gradient(rgba(48, 28, 38, 0.9), rgba(28, 30, 42, 0.88));
`;

const SpeedRow = styled.p`
  display: flex;
  height: 21px;
  align-items: center;
  color: #aaa;
  font-size: 11px;
  b {
    padding-left: 19px;
    color: #eee;
    font-weight: 400;
  }
`;

const SpeedDial = styled.div`
  position: relative;
  span {
    position: absolute;
    inset: 0;
    ${center}
    padding-left: 2px;
    color: #fff;
    font: 300 24px/28px Roboto, sans-serif;
  }
  small {
    padding-top: 10px;
    font-size: 11px;
    font-weight: 400;
    line-height: 12px;
  }
`;

const Thermometer = styled.svg`
  position: absolute;
  top: 0;
  left: 396px;
`;

const ImeBar = styled.div`
  position: absolute;
  bottom: 41px;
  left: 879px;
  display: flex;
  align-items: center;
  height: 24px;
  padding-left: 15px;
  border: 1px solid #b4cbe0;
  background: #fafcff;
  color: #1c74c8;
  > svg {
    position: absolute;
    top: -4px;
    left: -15px;
  }
  button {
    ${center}
    width: 22px;
    font-size: 15px;
    font-weight: 700;
  }
  ${"" /* greyed out while nobody is signed in */}
  button:nth-of-type(6) {
    color: #b4bed2;
  }
`;

const ImeMuted = styled.button`
  opacity: 0.9;
`;

const Watermark = styled.aside`
  position: absolute;
  right: 65px;
  bottom: 80px;
  width: 200px;
  color: rgba(255, 255, 255, 0.5);
  white-space: nowrap;
  pointer-events: none;
  h2 {
    font-size: 20px;
    font-weight: 400;
    line-height: 24px;
  }
  p {
    font-size: 15px;
    line-height: 22px;
  }
`;

export default App;
